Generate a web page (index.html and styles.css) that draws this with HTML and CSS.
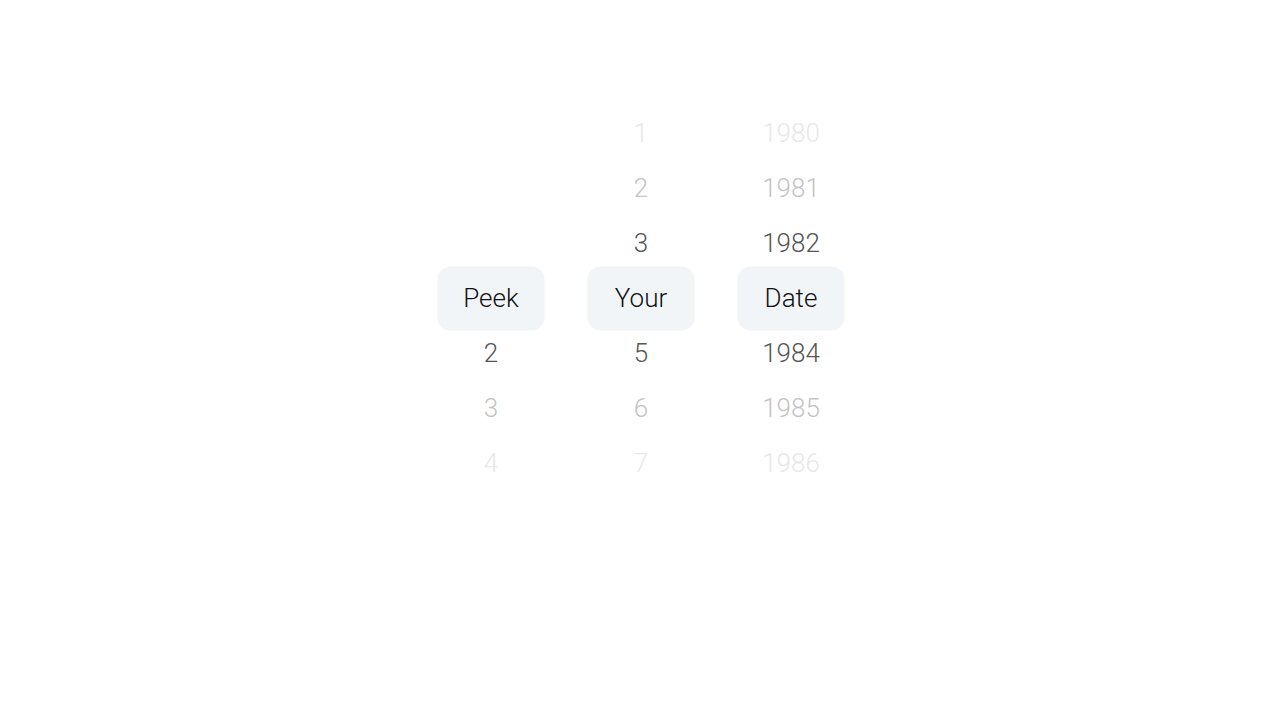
FILE: index.html
```html
<!DOCTYPE html>
<html lang="en">
<head>
    <meta charset="UTF-8">
    <meta name="viewport" content="width=device-width, initial-scale=1.0">
    <title>Date Picker</title>
    <link rel="stylesheet" href="styles.css">
</head>
<body>
    <div class="picker">
        <!-- first column -->
        <div class="wheel">
            <div class="item far3"></div>
            <div class="item far2"></div>
            <div class="item far1"></div>
            <div class="item selected">Peek</div>
            <div class="item far1">2</div>
            <div class="item far2">3</div>
            <div class="item far3">4</div>
        </div>

        <!-- second column -->
        <div class="wheel">
            <div class="item far3">1</div>
            <div class="item far2">2</div>
            <div class="item far1">3</div>
            <div class="item selected">Your</div>
            <div class="item far1">5</div>
            <div class="item far2">6</div>
            <div class="item far3">7</div>
        </div>

        <!-- third column -->
        <div class="wheel">
            <div class="item far3">1980</div>
            <div class="item far2">1981</div>
            <div class="item far1">1982</div>
            <div class="item selected">Date</div>
            <div class="item far1">1984</div>
            <div class="item far2">1985</div>
            <div class="item far3">1986</div>
        </div>
    </div>
</body>
</html>
```

FILE: styles.css
```css
* {
    margin: 0;
    padding: 0;
    box-sizing: border-box;
}

body {
    background: #ffffff;
    font-family: Roboto, 'Liberation Sans', sans-serif;
    font-weight: 300;
    height: 100vh;
}

.picker {
    display: flex;
    justify-content: center;
    gap: 44px;
    padding-top: 106px;
    padding-left: 2px;
}

.wheel {
    display: flex;
    flex-direction: column;
    width: 106px;
}

.item {
    height: 55px;
    line-height: 55px;
    text-align: center;
    font-size: 26px;
    color: #111111;
}

.selected {
    height: 63px;
    line-height: 63px;
    margin: -4px 0;
    background: #f2f5f8;
    border-radius: 13px;
    box-shadow: 0 0 2px rgba(225, 230, 238, 0.8);
    color: #111111;
}

.far1 {
    color: #555555;
}

.far2 {
    color: #c4c4c4;
}

.far3 {
    color: #e8e8e8;
}
```
